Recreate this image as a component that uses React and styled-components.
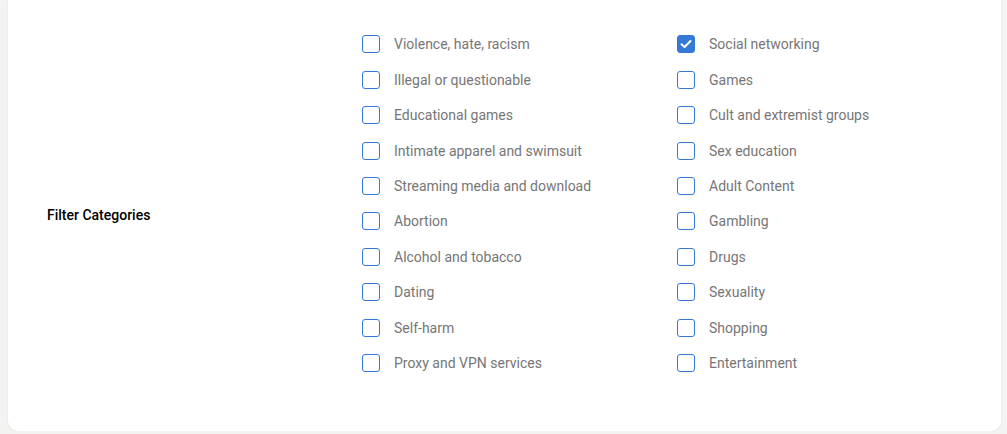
import React, { useState } from "react";
import styled, { createGlobalStyle } from "styled-components";

const Global = createGlobalStyle`
  html, body { margin: 0; padding: 0; background: #f3f3f1; }
  body { font-family: Roboto, "Liberation Sans", sans-serif; overflow: hidden; }
`;

const Page = styled.div`
  padding: 0 6px 0 8px;
`;

const Card = styled.section`
  margin-top: -1px;
  background: #ffffff;
  border-radius: 0 0 10px 10px;
  box-shadow: 0 1px 2px rgba(40, 50, 80, 0.08);
  display: grid;
  grid-template-columns: 315px 630px;
  padding: 0 0 0 39px;
  height: 432px;
  box-sizing: border-box;
`;

const Label = styled.div`
  align-self: center;
  font-size: 14px;
  font-weight: 500;
  color: #000;
`;

const Options = styled.div`
  display: grid;
  grid-template-columns: 315px 315px;
  grid-auto-flow: column;
  grid-template-rows: repeat(10, 35.44px);
  padding: 27.5px 0 50px;
`;

const Option = styled.label`
  display: flex;
  align-items: center;
  gap: 14px;
  font-size: 14px;
  color: #767676;
  cursor: pointer;
`;

const Box = styled.span`
  width: 18px;
  height: 18px;
  box-sizing: border-box;
  border-radius: 3px;
  border: 1.5px solid #3479d6;
  background: ${(p) => (p.$checked ? "#3479d6" : "#fff")};
  display: flex;
  align-items: center;
  justify-content: center;
  flex: none;
`;

const Text = styled.span`
  line-height: 18px;
`;

const left = [
  "Violence, hate, racism",
  "Illegal or questionable",
  "Educational games",
  "Intimate apparel and swimsuit",
  "Streaming media and download",
  "Abortion",
  "Alcohol and tobacco",
  "Dating",
  "Self-harm",
  "Proxy and VPN services",
];
const right = [
  "Social networking",
  "Games",
  "Cult and extremist groups",
  "Sex education",
  "Adult Content",
  "Gambling",
  "Drugs",
  "Sexuality",
  "Shopping",
  "Entertainment",
];

export default function App() {
  const [checked, setChecked] = useState({ "Social networking": true });
  const toggle = (k) => setChecked((c) => ({ ...c, [k]: !c[k] }));
  return (
    <>
      <Global />
      <Page>
        <Card>
          <Label>Filter Categories</Label>
          <Options>
            {[...left, ...right].map((name) => (
              <Option key={name} onClick={() => toggle(name)}>
                <Box $checked={!!checked[name]}>
                  {checked[name] && (
                    <svg width="12" height="10" viewBox="0 0 12 10">
                      <path d="M1.5 5.2 L4.6 8 L10.5 2" fill="none" stroke="#fff" strokeWidth="2" strokeLinecap="round" strokeLinejoin="round" />
                    </svg>
                  )}
                </Box>
                <Text>{name}</Text>
              </Option>
            ))}
          </Options>
        </Card>
      </Page>
    </>
  );
}
